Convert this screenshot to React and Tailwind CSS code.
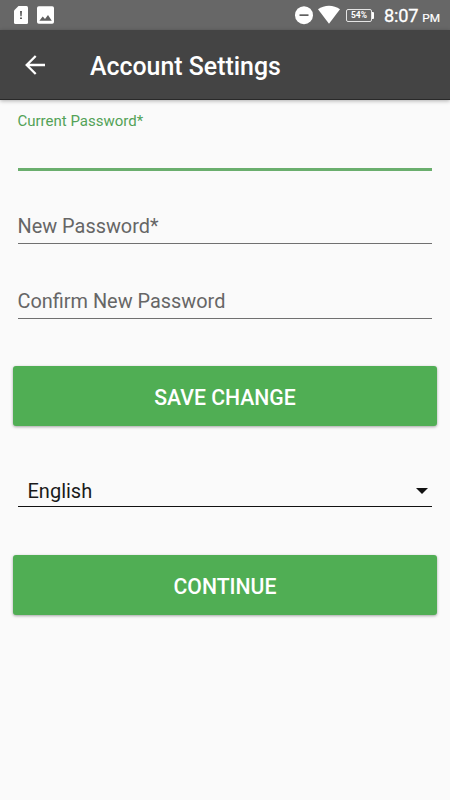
function StatusBar() {
  return (
    <div className="flex h-[30px] items-center bg-[#676767] text-white">
      <svg className="ml-[14px] h-[30px] w-[14px]" viewBox="0 0 14 30">
        <path d="M4.5 6H12.5Q14 6 14 7.5V22.5Q14 24 12.5 24H1.5Q0 24 0 22.5V10.5Z" fill="#fff" />
        <path d="M6.2 11H7.8L7.5 16.2H6.5ZM6.2 17.5H7.8V19H6.2Z" fill="#333" />
      </svg>
      <svg className="ml-[9px] h-[30px] w-[17px]" viewBox="0 0 17 30">
        <rect y="6.3" width="17" height="17.5" rx="1.8" fill="#fff" />
        <path d="M2.4 20.7L5.7 16.6L8 19L11 15L14.8 20.7Z" fill="#606060" />
      </svg>
      <svg className="ml-[241px] h-[30px] w-[18px]" viewBox="0 0 18 30">
        <circle cx="9" cy="15.2" r="9" fill="#fff" />
        <rect x="4.5" y="14.3" width="9" height="1.7" fill="#606060" />
      </svg>
      <svg className="ml-[5px] h-[30px] w-[22px]" viewBox="0 0 22 30">
        <path d="M0 9.3C6.2 4.6 15.8 4.6 22 9.3L11 23.8Z" fill="#fff" />
      </svg>
      <div className="ml-[6px] flex items-center">
        <div className="flex h-[13px] w-[26px] items-center justify-center rounded-[2px] border border-[#e4e4e4] text-[8.5px] font-bold leading-none">
          54%
        </div>
        <div className="h-[7px] w-[2px] rounded-r-[1px] bg-white" />
      </div>
      <div className="ml-[10px] mt-[2px] flex items-baseline whitespace-nowrap">
        <span className="text-[18.2px] leading-none tracking-[-0.2px] [-webkit-text-stroke:0.3px_white]">8:07</span>
        <span className="ml-[4px] text-[11.8px] leading-none [-webkit-text-stroke:0.2px_white]">PM</span>
      </div>
    </div>
  );
}

function Header() {
  return (
    <header className="flex h-[70px] items-center border-b border-[#292929] bg-[#444444] text-white shadow-[0_1px_4px_rgba(0,0,0,0.3)]">
      <svg className="ml-[25px] h-[20px] w-[20px]" viewBox="0 0 20 20" fill="none" stroke="#fff" strokeWidth="2.3">
        <path d="M20 10H2M10.7 1L1.7 10L10.7 19" />
      </svg>
      <h1 className="ml-[45px] mt-[4px] text-[24.9px] font-medium leading-[30px]">Account Settings</h1>
    </header>
  );
}

function Button({ children }) {
  return (
    <button className="ml-[12.5px] mr-[12.6px] flex h-[60px] items-center justify-center rounded-[3px] bg-[#50ae54] pt-[3px] text-[21.2px] font-medium leading-none text-white shadow-[0_1px_3px_rgba(0,0,0,0.35)]">
      {children}
    </button>
  );
}

function Field({ label }) {
  return (
    <div className="ml-[17.5px] mr-[17.6px] flex h-[30px] items-start border-b border-[#707070] pt-[1px] text-[19.9px] leading-[24px] text-[#666666]">
      {label}
    </div>
  );
}

export default function App() {
  return (
    <div className="flex h-[800px] w-[450px] flex-col overflow-hidden bg-[#fafafa] font-['Roboto',sans-serif]">
      <StatusBar />
      <Header />
      <main className="flex flex-col">
        <div className="ml-[17.5px] mr-[17.6px] h-[71px] border-b-[3px] border-[#6aae6d] pt-[12px] text-[15px] leading-[18px] text-[#53a257]">
          Current Password*
        </div>
        <div className="h-[43px]" />
        <Field label="New Password*" />
        <div className="h-[45px]" />
        <Field label="Confirm New Password" />
        <div className="h-[47px]" />
        <Button>SAVE CHANGE</Button>
        <div className="h-[53px]" />
        <div className="ml-[17.5px] mr-[17.6px] flex h-[28px] items-start justify-between border-b border-[#111111] pl-[10px] pr-[4px] text-[20px] leading-[24px] text-[#1a1a1a]">
          <span>English</span>
          <svg className="mt-[9px] h-[6px] w-[12px]" viewBox="0 0 12 6">
            <path d="M0 0H12L6 6Z" fill="#111" />
          </svg>
        </div>
        <div className="h-[48px]" />
        <Button>CONTINUE</Button>
      </main>
    </div>
  );
}
